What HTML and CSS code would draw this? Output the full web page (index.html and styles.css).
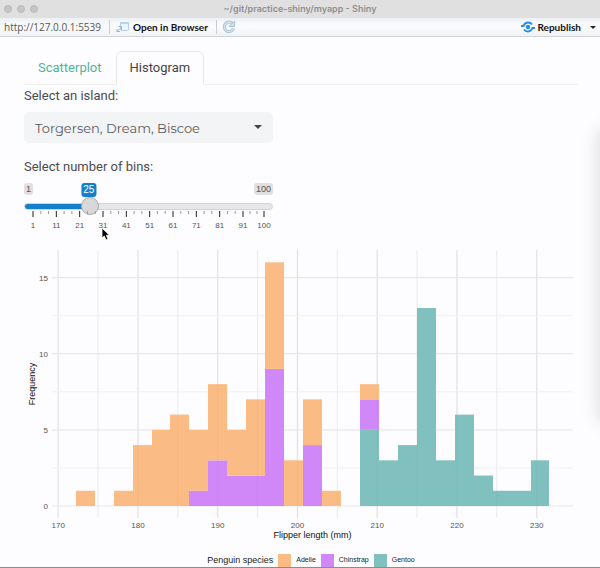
FILE: index.html
```html
<!DOCTYPE html>
<html lang="en">
<head>
<meta charset="utf-8">
<title>~/git/practice-shiny/myapp - Shiny</title>
<link rel="stylesheet" href="styles.css">
</head>
<body>
<header class="titlebar">
  <div class="lights"><span class="light"></span><span class="light"></span><span class="light"></span></div>
  <h1 class="title">~/git/practice-shiny/myapp - Shiny</h1>
</header>
<div class="toolbar">
  <span class="url">http://127.0.0.1:5539</span>
  <button class="tool open" type="button">
    <svg width="14" height="12" viewBox="0 0 14 12" aria-hidden="true"><rect x="4.500" y="1.500" width="8" height="8" rx="1" fill="#eaf4fc" stroke="#b4cfe4"/><path d="M4 1h9v2H4z" fill="#b4d5ee"/><path d="M1 10.500l4-4M2.500 5.500H5.500v3.500M1 8v2.500h3" fill="none" stroke="#9fb6c8"/></svg>
    Open in Browser
  </button>
  <button class="tool reload" type="button" aria-label="Reload">
    <svg width="14" height="14" viewBox="0 0 14 14" aria-hidden="true"><path d="M10.800 4A4.800 4.800 0 1 0 11.500 8.500" fill="none" stroke="#a8c3d8" stroke-width="3"/><path d="M10.800 4A4.800 4.800 0 1 0 11.500 8.500" fill="none" stroke="#e4f0f9" stroke-width="1"/><path d="M12.500 1v5.500H7z" fill="#cfe2f1" stroke="#a8c3d8"/></svg>
  </button>
  <button class="tool republish" type="button">
    <svg width="14" height="12" viewBox="0 0 14 12" aria-hidden="true"><g fill="none" stroke="#2490e6" stroke-width="2"><path d="M0 5h2.500C3.500 2.500 5 1.500 7 1.500S10 2 11 3.500"/><path d="M14 7h-2.500C10.500 9.500 9 10.500 7 10.500S4 10 3 8.500"/></g><circle cx="7" cy="6" r="2.200" fill="#2490e6"/></svg>
    Republish
  </button>
  <button class="tool more" type="button" aria-label="Publish options"><span class="caret"></span></button>
</div>
<main class="page">
  <nav class="tabs">
    <a class="tab" href="#scatterplot">Scatterplot</a>
    <a class="tab active" href="#histogram" aria-current="page">Histogram</a>
  </nav>
  <form class="controls">
    <label class="label" for="island">Select an island:</label>
    <div class="picker">
      <select id="island" class="select"><option>Torgersen, Dream, Biscoe</option></select>
      <span class="caret picker-caret"></span>
    </div>
    <label class="label" for="bins">Select number of bins:</label>
    <div class="slider">
      <div class="bubbles"><span class="limit">1</span><output class="value" for="bins">25</output><span class="limit">100</span></div>
      <input id="bins" class="range" type="range" min="1" max="100" value="25">
      <svg class="scale" viewBox="0 0 249 24" aria-hidden="true"><g id="ticks"></g></svg>
      <svg class="pointer" width="9" height="14" viewBox="0 0 9 14" aria-hidden="true"><path d="M1 1v10l2.300-2 1.700 4 2-.9-1.700-3.800H8.500z" fill="#000" stroke="#fff" stroke-width=".8"/></svg>
    </div>
  </form>
</main>
<figure class="plot">
  <svg class="chart" viewBox="0 242 600 304" role="img" aria-label="Histogram of flipper length by penguin species">
    <g id="grid"></g><g id="bars"></g><g id="axes"></g>
    <text class="axis-title" x="312.500" y="538" text-anchor="middle">Flipper length (mm)</text>
    <text class="axis-title" transform="translate(35 384) rotate(-90)" text-anchor="middle">Frequency</text>
  </svg>
  <figcaption class="legend">
    <span class="legend-title">Penguin species</span>
    <span class="key"><i class="swatch adelie"></i>Adelie</span>
    <span class="key"><i class="swatch chinstrap"></i>Chinstrap</span>
    <span class="key"><i class="swatch gentoo"></i>Gentoo</span>
  </figcaption>
</figure>
<script src="chart.js"></script>
</body>
</html>
```
FILE: styles.css
```css
* { box-sizing: border-box; }
body { margin: 0; min-height: 100vh; background: #fdfcfe; color: #4b4c4e; font: 13px/20px Roboto, sans-serif; overflow: hidden; border-bottom: 1px solid #8c8c8c; position: relative; }
body::after { content: ""; position: absolute; top: 128px; bottom: 144px; left: 100%; width: 20px; border-radius: 12px; box-shadow: 0 0 18px 2px rgba(0,0,0,.13); }
button { font: inherit; color: inherit; background: none; border: 0; padding: 0; }
.titlebar { display: grid; grid-template-columns: 1fr auto 1fr; align-items: center; height: 18px; padding: 0 4px; background: #e1e0e1; }
.lights { display: flex; gap: 5px; }
.light { width: 8px; height: 8px; border-radius: 50%; background: #c6c5c6; border: 1px solid #bcbbbc; }
.title { margin: 0; font: 600 9px/16px Inter, sans-serif; color: #8f8e8f; }
.toolbar { display: flex; align-items: center; height: 19px; padding: 0 4px; background: linear-gradient(#eef1f4, #fbfcfd 50%, #eff1f3); border-bottom: 1px solid #cfd6db; font: 10px/16px "Open Sans", sans-serif; color: #555; }
.tool { display: flex; align-items: center; gap: 3px; height: 14px; color: #111; font-family: Lato, sans-serif; font-weight: 700; }
.open { margin-left: 8px; padding: 0 8px 0 6px; border: solid #c9ced2; border-width: 0 1px; }
.reload { margin-left: 5px; }
.republish { margin-left: auto; }
.more { margin-left: 9px; }
.caret { border: solid transparent; border-width: 3px 3px 0; border-top-color: #222; }
.page { padding: 14px 22px 0 24px; }
.tabs { display: flex; height: 34px; border-bottom: 1px solid #eeeef0; }
.tab { height: 34px; padding: 6px 13px; border: 1px solid transparent; color: #4fb59b; text-decoration: none; }
.active { color: #444; background: #fdfcfe; border-color: #e9e9ec; border-bottom-color: #fdfcfe; border-radius: 6px 6px 0 0; }
.controls { width: 45%; max-width: 249px; }
.label { display: block; padding-top: 1px; }
.picker { position: relative; margin: 6px 0 13px; }
.select { display: block; width: 100%; height: 31px; padding: 0 11px; appearance: none; border: 0; border-radius: 5px; background: #f3f4f6; color: #5b5c5e; font: 13px Montserrat, Inter, sans-serif; }
.picker-caret { position: absolute; right: 11px; top: 13px; border-width: 4px 4px 0; border-top-color: #444; }
.slider { position: relative; padding-top: 6px; font: 9px/12px "Liberation Sans", sans-serif; }
.bubbles { display: flex; justify-content: space-between; }
.limit { height: 12px; padding: 0 2px; border-radius: 3px; background: #e0e0e0; color: #555; }
.value { position: absolute; left: 26%; transform: translateX(-50%); padding: 0 2px; border-radius: 3px; background: #1480cc; color: #fff; font-size: 10px; line-height: 14px; }
.range { display: block; width: 100%; height: 18px; margin: 2px 0 0; appearance: none; background: none; }
.range::-webkit-slider-runnable-track { height: 7px; border-radius: 4px; border: 1px solid #d3d3d3; background: linear-gradient(90deg, #1480cc 26%, #e7e7e7 26%) border-box; }
.range::-webkit-slider-thumb { appearance: none; width: 18px; height: 18px; margin-top: -7px; border-radius: 50%; border: 1px solid #aaa; background: #d8d8d8; }
.scale { display: block; width: 100%; margin-top: -5px; }
.scale text { font: 8px "Liberation Sans", sans-serif; fill: #555; }
.pointer { position: absolute; left: 77px; top: 50px; }
.plot { margin: 8px 0 0; font: 7px/14px "Liberation Sans", sans-serif; color: #222; }
.chart { display: block; width: 100%; }
.chart text { font-family: "Liberation Sans", sans-serif; }
.tick-label { font-size: 8px; fill: #555; }
.axis-title { font-size: 9px; fill: #111; }
.legend { display: flex; align-items: center; justify-content: center; gap: 5px; padding: 7px 0 0 22px; height: 21px; }
.legend-title { font-size: 9px; }
.key { display: flex; align-items: center; gap: 5px; }
.swatch { width: 13px; height: 13px; }
.adelie { background: #fabb85; fill: #fabb85; }
.chinstrap { background: #d088f8; fill: #d088f8; }
.gentoo { background: #80c1c0; fill: #80c1c0; }
```
FILE: chart.js
```js
const NS = "http://www.w3.org/2000/svg";
function add(parent, name, attrs, text) {
  const el = document.createElementNS(NS, name);
  for (const key in attrs) el.setAttribute(key, attrs[key]);
  if (text !== undefined) el.textContent = text;
  document.getElementById(parent).appendChild(el);
}

// Slider scale: labelled tick every ten bins, two short ticks between.
const stops = [1, 11, 21, 31, 41, 51, 61, 71, 81, 91, 100];
const sliderX = v => 9 + (v - 1) * 231 / 99;
stops.forEach((v, i) => {
  const x = sliderX(v);
  add("ticks", "path", { d: `M${x} 1v6`, stroke: "#222" });
  add("ticks", "text", { x, y: 18, "text-anchor": "middle" }, v);
  if (i < stops.length - 1) {
    const step = (sliderX(stops[i + 1]) - x) / 3;
    for (const k of [1, 2]) add("ticks", "path", { d: `M${x + step * k} 1v3`, stroke: "#999" });
  }
});

const plotX = mm => 58.2 + (mm - 170) * 7.975;
const plotY = n => 506 - n * 15.23;
for (let mm = 170; mm <= 230; mm += 5) {
  const major = mm % 10 === 0;
  add("grid", "path", { d: `M${plotX(mm)} 250V518`, stroke: major ? "#e8e8ea" : "#f0f0f2", "stroke-width": major ? 1.4 : 1 });
  if (major) add("axes", "text", { class: "tick-label", x: plotX(mm), y: 528, "text-anchor": "middle" }, mm);
}
for (let n = 0; n <= 15; n += 2.5) {
  const major = n % 5 === 0;
  add("grid", "path", { d: `M52 ${plotY(n)}H573`, stroke: major ? "#e8e8ea" : "#f0f0f2", "stroke-width": major ? 1.2 : 1 });
  if (major) add("axes", "text", { class: "tick-label", x: 48, y: plotY(n) + 3, "text-anchor": "end" }, n);
}

// Counts per bin, stacked upwards: [gentoo, chinstrap, adelie].
const bins = [
  [0,0,1],[0,0,0],[0,0,1],[0,0,4],[0,0,5],[0,0,6],[0,1,4],[0,3,5],[0,2,3],[0,2,5],
  [0,9,7],[0,0,3],[0,4,3],[0,0,1],[0,0,0],[5,2,1],[3,0,0],[4,0,0],[13,0,0],[3,0,0],
  [6,0,0],[2,0,0],[1,0,0],[1,0,0],[3,0,0]
];
const edge = k => Math.round(75.7 + k * 18.95);
bins.forEach((counts, k) => {
  let base = 0;
  ["gentoo", "chinstrap", "adelie"].forEach((name, s) => {
    const n = counts[s];
    if (n) add("bars", "rect", { class: name, x: edge(k), y: plotY(base + n), width: edge(k + 1) - edge(k), height: n * 15.23 });
    base += n;
  });
});
// Let the grid show faintly through the bars.
for (let mm = 175; mm <= 230; mm += 5) {
  add("bars", "path", { d: `M${plotX(mm)} 250V518`, stroke: "#000", "stroke-opacity": .025 });
}
```
